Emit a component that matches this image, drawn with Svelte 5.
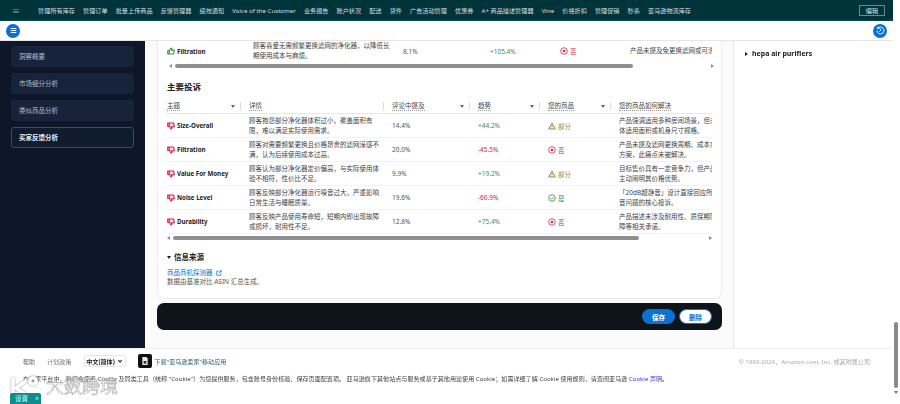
<script>
	const navItems = ['管理所有库存', '管理订单', '批量上传商品', '反馈管理器', '绩效通知', 'Voice of the Customer', '业务报告', '账户状况', '配送', '货件', '广告活动管理', '优惠券', 'A+ 商品描述管理器', 'Vine', '价格折扣', '管理促销', '秒杀', '亚马逊物流库存'];
	const sideItems = ['洞察概要', '市场细分分析', '类似商品分析', '买家反馈分析'];
	const heads = ['主题', '详情', '评论中提及', '趋势', '您的商品', '您的商品如何解决'];
	// fix text breaks by hand: the column runs on past the clip, like the real table
	const complaints = [
		{ topic: 'Size-Overall', detail: '顾客抱怨部分净化器体积过小，覆盖面积有限，难以满足实际使用需求。', pct: '14.4%', trend: '+44.2%', status: 'part', fix: '产品强调适用多种房间场景，但未明确整\n体适用面积或机身尺寸规格。' },
		{ topic: 'Filtration', detail: '顾客对需要频繁更换且价格昂贵的滤网深感不满，认为后续使用成本过高。', pct: '20.0%', trend: '-45.5%', status: 'no', fix: '产品未提及滤网更换周期、成本或替代\n方案，此痛点未被解决。' },
		{ topic: 'Value For Money', detail: '顾客认为部分净化器定价偏高，与实际使用体验不相符，性价比不足。', pct: '9.9%', trend: '+19.2%', status: 'part', fix: '目标售价具有一定竞争力，但产品未\n主动阐明其价格优势。' },
		{ topic: 'Noise Level', detail: '顾客反映部分净化器运行噪音过大，严重影响日常生活与睡眠质量。', pct: '19.6%', trend: '-60.9%', status: 'yes', fix: '「20dB超静音」设计直接回应所有噪\n音问题的核心投诉。' },
		{ topic: 'Durability', detail: '顾客反映产品使用寿命短，短期内即出现故障或损坏，耐用性不足。', pct: '12.8%', trend: '+75.4%', status: 'no', fix: '产品描述未涉及耐用性、质保期限、故\n障等相关承诺。' }
	];
	const statusLabel = { part: '部分', no: '否', yes: '是' };
</script>

{#snippet statusIcon(kind)}
	{#if kind === 'part'}
		<svg class="ico" viewBox="0 0 16 16" fill="none" stroke="#8a6a1f" stroke-width="1.6"><path d="M8 2 14.5 14h-13z" stroke-linejoin="round" /><path d="M8 6.5v4M8 11.5v1.2" /></svg>
	{:else if kind === 'no'}
		<svg class="ico" viewBox="0 0 16 16" fill="none" stroke="#d1224f" stroke-width="1.6"><circle cx="8" cy="8" r="6.6" /><circle cx="8" cy="8" r="2.6" fill="#d1224f" stroke="none" /></svg>
	{:else}
		<svg class="ico" viewBox="0 0 16 16" fill="none" stroke="#2e8b3d" stroke-width="1.6"><circle cx="8" cy="8" r="6.6" /><path d="m5 8.2 2.2 2.2L11 6" /></svg>
	{/if}
{/snippet}

{#snippet thumb(up)}
	<svg class="ico thumb" class:down={!up} viewBox="0 0 16 16" fill={up ? 'none' : '#fbdde5'} stroke={up ? '#3f9142' : '#d1224f'} stroke-width="2.2" stroke-linejoin="round">
		<path d="M1.5 7h3v7h-3zM4.5 7.5 8 2c1.5 0 2 1 1.6 2.2L9 6.2h5l.8 1L13 14H4.5" />
	</svg>
{/snippet}

<div class="page">
	<div class="shell">
		<nav class="topnav">
			<span class="burger">≡</span>
			{#each navItems as item}
				<span class="nav-item">{item}</span>
			{/each}
			<span class="edit">编辑</span>
		</nav>

		<div class="subbar">
			<span class="round-btn">
				<svg viewBox="0 0 16 16" fill="none" stroke="#fff" stroke-width="1.5"><path d="M4 5h8M4 8h8M4 11h8" /></svg>
			</span>
			<span class="round-btn">
				<svg viewBox="0 0 16 16" fill="none" stroke="#fff" stroke-width="1.4"><path d="M4 5a5 5 0 1 1-1 3.4M4 2.5V5h2.5M8 5.5V8l-1.6 1.5" /></svg>
			</span>
		</div>

		<div class="workspace">
			<aside class="sidebar">
				{#each sideItems as item, i}
					<div class="side-item" class:active={i === 3}>{item}</div>
				{/each}
			</aside>

			<main class="main">
				<section class="card">
					<div class="row first-row">
						<div class="topic">{@render thumb(true)}<b>Filtration</b></div>
						<div class="detail">顾客喜爱无需频繁更换滤网的净化器，以降低长期使用成本与麻烦。</div>
						<div class="pct">8.1%</div>
						<div class="trend up">+105.4%</div>
						<div class="status no">{@render statusIcon('no')}否</div>
						<div class="fix">产品未提及免更换滤网或可洗滤网设计。</div>
					</div>
					<div class="hscroll first-scroll"><i class="arrow left"></i><span class="bar"></span><i class="arrow right"></i></div>

					<h2>主要投诉</h2>

					<div class="row head-row">
						{#each heads as head, i}
							<div class="head">
								<span class="head-label">{head}</span>
								{#if i !== 1 && i !== 5}<i class="sort"></i>{/if}
							</div>
						{/each}
					</div>
					{#each complaints as row}
						<div class="row body-row">
							<div class="topic">{@render thumb(false)}<b>{row.topic}</b></div>
							<div class="detail">{row.detail}</div>
							<div class="pct">{row.pct}</div>
							<div class="trend" class:up={row.trend[0] === '+'} class:down={row.trend[0] === '-'}>{row.trend}</div>
							<div class="status {row.status}">{@render statusIcon(row.status)}{statusLabel[row.status]}</div>
							<div class="fix">{row.fix}</div>
						</div>
					{/each}
					<div class="hscroll"><i class="arrow left"></i><span class="bar"></span><i class="arrow right"></i></div>

					<div class="sources">
						<h3><i class="tri-down"></i>信息来源</h3>
						<a href="#src">商品商机探测器
							<svg viewBox="0 0 16 16" fill="none" stroke="#0972d3" stroke-width="2"><path d="M7 3H2v11h11V9M9 2h5v5M14 2 7 9" /></svg>
						</a>
						<p>数据由基准对比 ASIN 汇总生成。</p>
					</div>
				</section>

				<div class="actions">
					<button class="primary">保存</button>
					<button class="secondary">删除</button>
				</div>
			</main>

			<aside class="rightpanel">
				<div class="keyword"><i class="tri-right"></i>hepa air purifiers</div>
			</aside>
		</div>
	</div>

	<div class="pagebar"><span class="thumbbar"></span><i class="pagearrow"></i></div>

	<footer class="footer">
		<div class="foot-top">
			<span class="foot-link">帮助</span>
			<span class="foot-link">计划政策</span>
			<span class="lang">中文(简体)<svg viewBox="0 0 10 10" fill="none" stroke="#222" stroke-width="1.8"><path d="m2 3.5 3 3 3-3" /></svg></span>
			<span class="app-icon"><svg viewBox="0 0 12 14" fill="#e8e8e8"><path d="M2 1h6l2 2v10H2z" /><path d="M4 7h4v4H4z" fill="#333" /></svg></span>
			<span class="app-link">下载"亚马逊卖家"移动应用</span>
			<span class="copyright">© 1999-2026，Amazon.com, Inc. 或其附属公司</span>
		</div>
		<p class="cookie">在卖家平台中，我们会使用 Cookie 及同类工具（统称 "Cookie"）为您提供服务，包含账号身份核验、保存页面配置项。 亚马逊旗下其他站点与服务或基于其他用途使用 Cookie；如需详细了解 Cookie 使用规则，请查阅亚马逊 <span class="cookie-link">Cookie 声明</span>。</p>
	</footer>

	<div class="watermark">
		<svg viewBox="0 0 32 20" fill="none" stroke="#fff" stroke-width="3.4"><path d="M5 2v15M19 4 8 12l10 7" /><circle cx="25" cy="5" r="3.2" /></svg>
		<span>大数跨境</span>
	</div>
	<div class="feedback">设置<span>×</span></div>
</div>

<style>
	:global(body) {
		margin: 0;
		background: #fff;
	}
	.page {
		position: relative;
		width: 900px;
		height: 404px;
		overflow: hidden;
		display: grid;
		grid-template-columns: 893px 7px;
		grid-template-rows: 348px 56px;
		font-family: 'Noto Sans', 'Noto Sans CJK SC', sans-serif;
		font-size: 6.5px;
		color: #333;
		filter: blur(0.35px);
	}
	.shell {
		display: flex;
		flex-direction: column;
		min-width: 0;
		overflow: hidden;
	}
	.topnav {
		height: 21px;
		flex: none;
		box-sizing: border-box;
		background: #00343b;
		border-bottom: 1px solid #0d4a50;
		display: flex;
		align-items: center;
		gap: 8.1px;
		padding: 0 8px 0 12px;
		color: #d5dfe0;
		white-space: nowrap;
		font-size: 6.15px;
	}
	.burger {
		width: 18px;
		font-size: 8px;
		color: #8fa5a8;
	}
	.edit {
		margin-left: auto;
		width: 26px;
		height: 11px;
		box-sizing: border-box;
		border: 1px solid #6f8a8e;
		text-align: center;
		line-height: 9px;
		color: #e6eded;
	}
	.subbar {
		height: 20px;
		flex: none;
		box-sizing: border-box;
		display: flex;
		align-items: center;
		justify-content: space-between;
		padding: 0 6px;
		border-bottom: 1px solid #e6e6e6;
	}
	.round-btn {
		width: 14px;
		height: 14px;
		border-radius: 50%;
		background: #0a6fd6;
		display: flex;
		align-items: center;
		justify-content: center;
	}
	.round-btn svg {
		width: 11px;
		height: 11px;
	}
	.workspace {
		flex: 1;
		min-height: 0;
		display: grid;
		grid-template-columns: 145px 588px 160px;
	}
	.sidebar {
		background: #0d1729;
		padding: 5px 11px;
		display: flex;
		flex-direction: column;
		gap: 6px;
	}
	.side-item {
		height: 21px;
		box-sizing: border-box;
		border-radius: 3px;
		background: #16233a;
		color: #b4bcc8;
		padding-left: 8px;
		line-height: 21px;
	}
	.side-item.active {
		background: #0f1b2f;
		border: 1px solid #17509c;
		color: #eef1f5;
		font-weight: 700;
		line-height: 19px;
		padding-left: 7px;
	}
	.main {
		background: #fbfbfb;
		padding: 0 11px 0 12px;
		overflow: hidden;
	}
	.card {
		box-sizing: border-box;
		height: 258px;
		background: #fff;
		border: 1px solid #eeeeee;
		border-top: 0;
		border-radius: 0 0 7px 7px;
		padding: 0 9px;
		overflow: hidden;
	}
	.row {
		display: grid;
		grid-template-columns: 82px 143px 86px 70px 71px 93px;
		width: 545px;
		align-items: center;
		overflow: hidden;
	}
	.first-row {
		grid-template-columns: 86px 150px 87px 70px 70px 82px;
		height: 20px;
	}
	.body-row {
		height: 24px;
		border-bottom: 1px solid #f3f3f3;
		box-sizing: border-box;
	}
	.topic {
		display: flex;
		align-items: center;
		gap: 2px;
		color: #222;
		font-size: 6.2px;
	}
	.detail {
		line-height: 9.6px;
		padding-right: 11px;
		color: #444;
	}
	.pct {
		color: #555;
	}
	.trend.up {
		color: #3f9142;
	}
	.trend.down {
		color: #d1224f;
	}
	.status {
		display: flex;
		align-items: center;
		gap: 2px;
	}
	.status.part {
		color: #a98b45;
	}
	.status.no {
		color: #d1224f;
	}
	.status.yes {
		color: #3f9142;
	}
	.fix {
		line-height: 9.6px;
		overflow: hidden;
		white-space: pre;
		color: #444;
	}
	.ico {
		width: 8px;
		height: 8px;
		flex: none;
	}
	.thumb.down {
		transform: rotate(180deg) scaleX(-1);
	}
	.hscroll {
		height: 6px;
		display: flex;
		align-items: center;
		gap: 3px;
		width: 545px;
		margin-top: 1px;
	}
	.first-scroll {
		margin-top: 2px;
		margin-left: 2px;
	}
	.bar {
		width: 466px;
		height: 4px;
		border-radius: 2px;
		background: #8f8f8f;
	}
	.first-scroll .bar {
		width: 458px;
	}
	.arrow {
		width: 0;
		height: 0;
		border-top: 2px solid transparent;
		border-bottom: 2px solid transparent;
	}
	.arrow.left {
		border-right: 3px solid #8f8f8f;
	}
	.arrow.right {
		margin-left: auto;
		border-left: 3px solid #8f8f8f;
	}
	h2 {
		margin: 12px 0 6px;
		font-size: 8.5px;
		line-height: 12px;
		font-weight: 700;
		color: #222;
	}
	.head-row {
		height: 15px;
		border-bottom: 1px solid #e9e9e9;
		box-sizing: border-box;
	}
	.head {
		display: flex;
		align-items: center;
		justify-content: space-between;
		padding-right: 5px;
		border-right: 1px solid #ddd;
		margin-right: 8px;
		height: 8px;
	}
	.head:last-child {
		border-right: 0;
	}
	.head-label {
		color: #444;
		border-bottom: 1px dotted #999;
		line-height: 9px;
		white-space: nowrap;
	}
	.sort {
		width: 0;
		height: 0;
		border-left: 2.5px solid transparent;
		border-right: 2.5px solid transparent;
		border-top: 3px solid #666;
	}
	.sources {
		margin-top: 11px;
	}
	h3 {
		margin: 0 0 5px;
		font-size: 7.5px;
		line-height: 11px;
		font-weight: 700;
		color: #222;
		display: flex;
		align-items: center;
		gap: 3px;
	}
	.tri-down {
		width: 0;
		height: 0;
		border-left: 2.5px solid transparent;
		border-right: 2.5px solid transparent;
		border-top: 3.5px solid #222;
	}
	.sources a {
		display: flex;
		align-items: center;
		gap: 3px;
		color: #0972d3;
		text-decoration: none;
		line-height: 9px;
	}
	.sources a svg {
		width: 6px;
		height: 6px;
	}
	.sources p {
		margin: 0;
		color: #555;
		line-height: 9px;
	}
	.actions {
		margin-top: 4px;
		height: 27px;
		border-radius: 7px;
		background: #0f141a;
		display: flex;
		align-items: center;
		justify-content: flex-end;
		gap: 4px;
		padding-right: 10px;
	}
	.actions button {
		width: 33px;
		height: 15px;
		padding: 0;
		border-radius: 8px;
		font: 700 6.5px 'Noto Sans', 'Noto Sans CJK SC', sans-serif;
	}
	.primary {
		background: #0972d3;
		border: 0;
		color: #fff;
	}
	.secondary {
		background: #fff;
		border: 1px solid #0972d3;
		color: #0972d3;
	}
	.rightpanel {
		border-left: 1px solid #e6e6e6;
		padding: 8px 11px;
	}
	.keyword {
		display: flex;
		align-items: center;
		gap: 4px;
		font-size: 7px;
		font-weight: 700;
		color: #222;
		line-height: 10px;
	}
	.tri-right {
		width: 0;
		height: 0;
		border-top: 2.5px solid transparent;
		border-bottom: 2.5px solid transparent;
		border-left: 3.5px solid #222;
	}
	.pagebar {
		grid-column: 2;
		grid-row: 1 / 3;
		display: flex;
		flex-direction: column;
		align-items: center;
		justify-content: flex-end;
		padding-bottom: 10px;
		gap: 3px;
		padding-right: 1px;
	}
	.thumbbar {
		width: 4px;
		height: 66px;
		border-radius: 2px;
		background: #8a8a8a;
	}
	.pagearrow {
		width: 0;
		height: 0;
		border-left: 2.5px solid transparent;
		border-right: 2.5px solid transparent;
		border-top: 3px solid #777;
	}
	.footer {
		grid-column: 1;
		grid-row: 2;
		border-top: 1px solid #eee;
		padding: 5px 23px 0;
		min-width: 0;
		font-size: 6.08px;
	}
	.foot-top {
		display: flex;
		align-items: center;
		height: 14px;
		color: #666;
	}
	.foot-link {
		margin-right: 12px;
	}
	.foot-link + .foot-link {
		color: #777;
	}
	.lang {
		width: 42px;
		height: 12px;
		box-sizing: border-box;
		border: 1px solid #e6e6e6;
		border-radius: 2px;
		display: flex;
		align-items: center;
		justify-content: center;
		gap: 2px;
		color: #222;
		font-weight: 700;
		margin-right: 12px;
	}
	.lang svg {
		width: 6px;
		height: 6px;
	}
	.app-icon {
		width: 14px;
		height: 14px;
		border-radius: 2px;
		background: #111;
		display: flex;
		align-items: center;
		justify-content: center;
		margin-right: 3px;
	}
	.app-icon svg {
		width: 8px;
		height: 10px;
	}
	.app-link {
		color: #2f5f6b;
	}
	.copyright {
		margin-left: auto;
		color: #aaa;
	}
	.cookie {
		margin: 7px 0 0;
		color: #444;
		white-space: nowrap;
		line-height: 9px;
	}
	.cookie-link {
		color: #3b3bd6;
	}
	.watermark {
		position: absolute;
		left: 8px;
		top: 375px;
		display: flex;
		align-items: center;
		gap: 6px;
		color: rgba(255, 255, 255, 0.85);
		-webkit-text-stroke: 0.6px rgba(140, 140, 140, 0.75);
		font-size: 18px;
		line-height: 22px;
	}
	.watermark svg {
		width: 32px;
		height: 20px;
		filter: drop-shadow(0 0 1px #999);
	}
	.feedback {
		position: absolute;
		left: 10px;
		top: 393px;
		width: 31px;
		height: 14px;
		box-sizing: border-box;
		border-radius: 2px 2px 0 0;
		background: #0f8c8c;
		color: #dff;
		padding-left: 5px;
		line-height: 11px;
	}
	.feedback span {
		margin-left: 7px;
	}
</style>
